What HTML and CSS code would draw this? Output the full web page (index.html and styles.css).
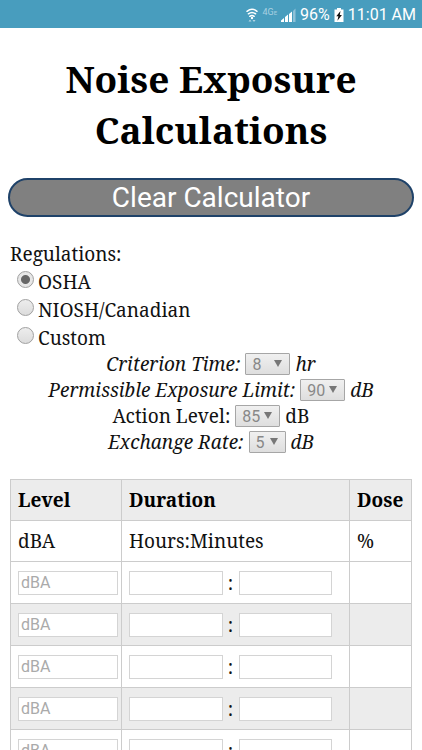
FILE: index.html
```html
<!DOCTYPE html>
<html lang="en">
<head>
    <meta charset="UTF-8">
    <meta name="viewport" content="width=device-width, initial-scale=1">
    <title>Noise Exposure Calculations</title>
    <link rel="stylesheet" href="styles.css">
</head>
<body>
    <header class="status-bar">
        <svg class="icon-wifi" viewBox="0 0 12 16" width="12" height="16" aria-hidden="true">
            <g fill="none" stroke="#fff" stroke-width="1.5" stroke-linecap="round">
                <path d="M1 4.3 Q6 0.3 11 4.3"/>
                <path d="M2.4 6.8 Q6 4 9.6 6.8"/>
                <path d="M3.8 9.3 Q6 7.6 8.2 9.3"/>
            </g>
            <circle cx="6" cy="11" r="1.2" fill="#fff"/>
            <path d="M2.5 14.5 L4 12.6 L5.5 14.5 Z M6.5 13 L8 14.9 L9.5 13 Z" fill="#b5d6e4"/>
        </svg>
        <span class="network">4G<small>E</small></span>
        <svg class="icon-signal" viewBox="0 0 15 14" width="15" height="14" aria-hidden="true">
            <path d="M0 14 V12.5 L3 10 V14 Z M4 14 V9 L7 6.5 V14 Z M8 14 V6 L11 3.5 V14 Z" fill="#fff"/>
            <path d="M12 14 V3 L14.5 0.5 V14 Z" fill="#8fc1d7"/>
        </svg>
        <span class="percent">96%</span>
        <svg class="icon-battery" viewBox="0 0 10 14" width="10" height="14" aria-hidden="true">
            <path d="M3 0 H7 V1.5 H9.5 V14 H0.5 V1.5 H3 Z" fill="#fff"/>
            <path d="M6.5 3 L2.3 8.2 H4.4 L3.4 12.7 L7.9 6.9 H5.8 Z" fill="#111"/>
        </svg>
        <span class="time">11:01 AM</span>
    </header>

    <main class="page">
        <h1>Noise Exposure Calculations</h1>
        <button type="button" class="clear-btn">Clear Calculator</button>

        <form class="calculator">
            <div class="regulations" role="radiogroup" aria-labelledby="reg-title">
                <div id="reg-title">Regulations:</div>
                <div class="option">
                    <input type="radio" name="regulation" id="osha" checked>
                    <label for="osha">OSHA</label>
                </div>
                <div class="option">
                    <input type="radio" name="regulation" id="niosh">
                    <label for="niosh">NIOSH/Canadian</label>
                </div>
                <div class="option">
                    <input type="radio" name="regulation" id="custom">
                    <label for="custom">Custom</label>
                </div>
            </div>

            <div class="settings">
                <div class="setting italic">
                    <label for="criterion">Criterion Time:</label>
                    <span class="select"><select id="criterion" disabled><option>8</option></select></span>
                    <span>hr</span>
                </div>
                <div class="setting italic">
                    <label for="limit">Permissible Exposure Limit:</label>
                    <span class="select"><select id="limit" disabled><option>90</option></select></span>
                    <span>dB</span>
                </div>
                <div class="setting">
                    <label for="action">Action Level:</label>
                    <span class="select"><select id="action" disabled><option>85</option></select></span>
                    <span>dB</span>
                </div>
                <div class="setting italic">
                    <label for="exchange">Exchange Rate:</label>
                    <span class="select short"><select id="exchange" disabled><option>5</option></select></span>
                    <span>dB</span>
                </div>
            </div>

            <table class="levels">
                <colgroup>
                    <col class="col-level">
                    <col class="col-duration">
                    <col class="col-dose">
                </colgroup>
                <tr>
                    <th>Level</th>
                    <th>Duration</th>
                    <th>Dose</th>
                </tr>
                <tr>
                    <td>dBA</td>
                    <td>Hours:Minutes</td>
                    <td>%</td>
                </tr>
                <tr class="entry">
                    <td><input type="text" placeholder="dBA" aria-label="Level 1"></td>
                    <td><div class="duration"><input type="text" aria-label="Hours 1"><span>:</span><input type="text" aria-label="Minutes 1"></div></td>
                    <td></td>
                </tr>
                <tr class="entry">
                    <td><input type="text" placeholder="dBA" aria-label="Level 2"></td>
                    <td><div class="duration"><input type="text" aria-label="Hours 2"><span>:</span><input type="text" aria-label="Minutes 2"></div></td>
                    <td></td>
                </tr>
                <tr class="entry">
                    <td><input type="text" placeholder="dBA" aria-label="Level 3"></td>
                    <td><div class="duration"><input type="text" aria-label="Hours 3"><span>:</span><input type="text" aria-label="Minutes 3"></div></td>
                    <td></td>
                </tr>
                <tr class="entry">
                    <td><input type="text" placeholder="dBA" aria-label="Level 4"></td>
                    <td><div class="duration"><input type="text" aria-label="Hours 4"><span>:</span><input type="text" aria-label="Minutes 4"></div></td>
                    <td></td>
                </tr>
                <tr class="entry">
                    <td><input type="text" placeholder="dBA" aria-label="Level 5"></td>
                    <td><div class="duration"><input type="text" aria-label="Hours 5"><span>:</span><input type="text" aria-label="Minutes 5"></div></td>
                    <td></td>
                </tr>
            </table>
        </form>
    </main>
</body>
</html>
```

FILE: styles.css
```css
* {
    box-sizing: border-box;
}
body {
    margin: 0;
    height: 100vh;
    display: flex;
    flex-direction: column;
    overflow: hidden;
    background: #fff;
    color: #111;
    font-family: "Noto Serif", "DejaVu Serif Condensed", "DejaVu Serif", serif;
    font-size: 19px;
    line-height: 28px;
}

/* phone status bar */
.status-bar {
    flex: none;
    height: 28px;
    padding: 2px 6px 0 0;
    display: flex;
    justify-content: flex-end;
    align-items: center;
    gap: 4px;
    background: #489dbe;
    color: #fff;
    font-family: Roboto, sans-serif;
    font-size: 16px;
}
.network {
    align-self: flex-start;
    font-size: 9px;
    line-height: 20px;
    color: #a9d0e1;
}
.network small {
    font-size: 6px;
}

.page {
    flex: 1;
    min-height: 0;
    overflow: hidden;
    padding: 0 8px;
}
h1 {
    margin: 25px 0 23px;
    text-align: center;
    color: #000;
    font-size: 37px;
    line-height: 51px;
}
.clear-btn {
    display: block;
    width: 100%;
    height: 39px;
    padding: 0;
    border: 2px solid #1f4269;
    border-radius: 20px;
    background: #808080;
    color: #fff;
    font-family: Roboto, sans-serif;
    font-size: 28px;
    line-height: 34px;
}
.calculator {
    margin-top: 23px;
    padding: 0 2px;
}

.option {
    display: flex;
    align-items: center;
    gap: 4px;
    padding-left: 7px;
}
.option input {
    appearance: none;
    width: 17px;
    height: 17px;
    margin: 0 0 6px;
    border: 1px solid #a0a0a0;
    border-radius: 50%;
    background: linear-gradient(#ededed, #dcdcdc);
}
.option input:checked {
    background: radial-gradient(circle, #666 4px, #e6e6e6 5px);
}

.settings {
    margin-top: -1px;
}
.setting {
    display: flex;
    justify-content: center;
    align-items: center;
    gap: 5px;
    line-height: 26px;
}
.italic {
    font-style: italic;
}
.select {
    position: relative;
    display: flex;
    width: 45px;
}
.select.short {
    width: 37px;
}
.select::after {
    content: "";
    position: absolute;
    top: 7px;
    right: 8px;
    border: 4px solid transparent;
    border-top: 7px solid #777;
    border-bottom: 0;
    pointer-events: none;
}
.select select {
    appearance: none;
    width: 100%;
    height: 22px;
    padding: 0 6px;
    border: 1px solid #a6a6a6;
    border-radius: 1px;
    background: linear-gradient(#f0f0f0, #dedede);
    color: #888;
    opacity: 1;
    font-family: Roboto, sans-serif;
    font-size: 16px;
}

.levels {
    width: 100%;
    margin-top: 24px;
    border-collapse: collapse;
    table-layout: fixed;
}
.col-level {
    width: 111px;
}
.col-dose {
    width: 62px;
}
.levels th, .levels td {
    height: 41px;
    padding: 0 7px;
    border: 1px solid #ccc;
    text-align: left;
}
.levels th {
    color: #000;
}
.levels tr:first-child, .levels .entry:nth-child(even) {
    background: #ececec;
}
.levels .entry td {
    height: 42px;
}
.levels .entry td:first-child {
    padding-right: 3px;
}
.levels input {
    display: block;
    width: 100%;
    height: 24px;
    padding: 0 2px;
    border: 1px solid #d4d4d4;
    background: #fff;
    font-family: Roboto, sans-serif;
    font-size: 16px;
}
.levels input::placeholder {
    color: #aaa;
}
.duration {
    display: flex;
    align-items: center;
    padding-right: 10px;
}
.duration input {
    flex: 1;
    min-width: 0;
}
.duration span {
    flex: none;
    width: 16px;
    text-align: center;
}
```
